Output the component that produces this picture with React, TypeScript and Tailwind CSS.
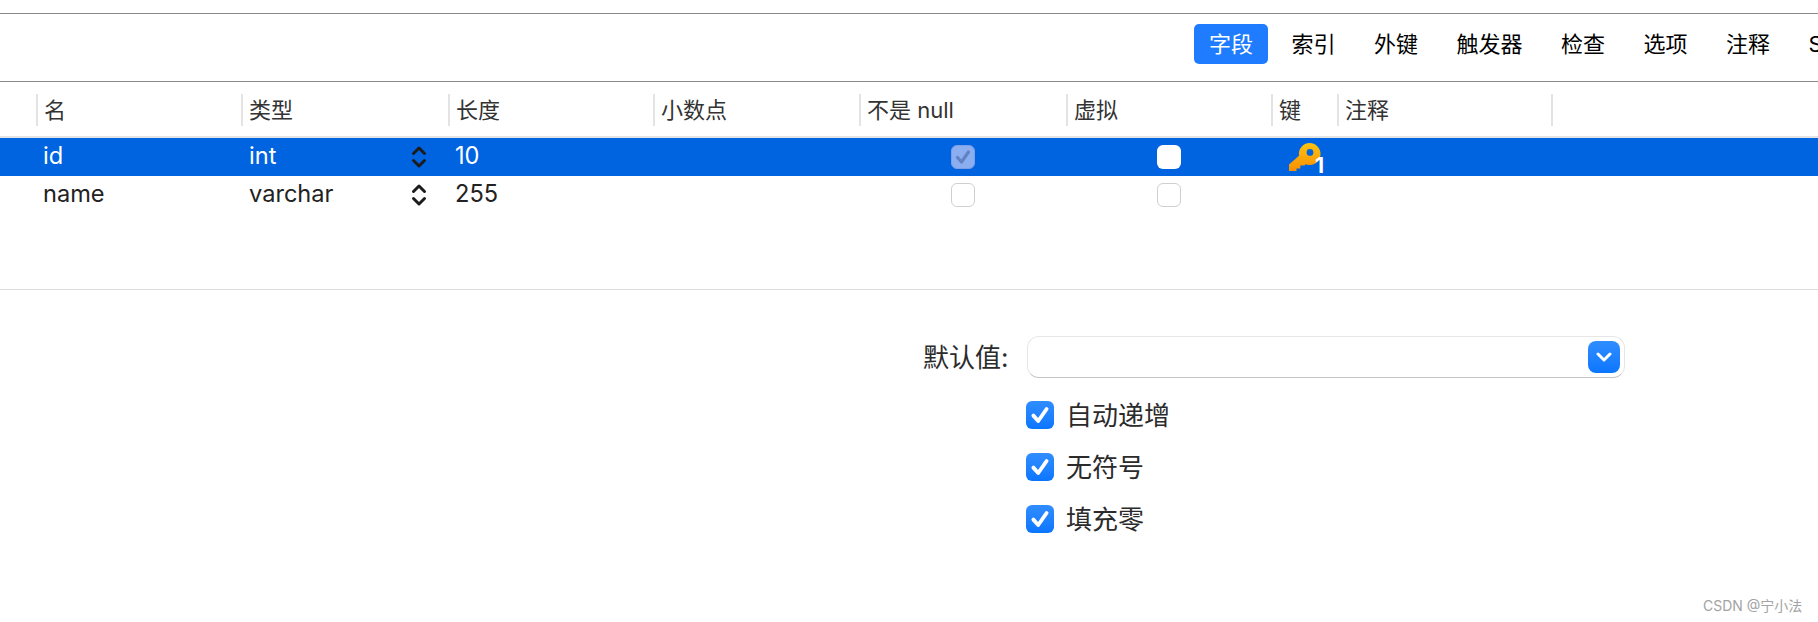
import { useId } from "react";

const tabs = ["字段", "索引", "外键", "触发器", "检查", "选项", "注释", "SQL 预览"];

const columns = [
  { label: "名", width: "w-[205px]" },
  { label: "类型", width: "w-[207px]" },
  { label: "长度", width: "w-[205px]" },
  { label: "小数点", width: "w-[206px]" },
  { label: "不是 null", width: "w-[207px]" },
  { label: "虚拟", width: "w-[205px]" },
  { label: "键", width: "w-[66px]" },
  { label: "注释", width: "w-[214px]" },
];

const options = ["自动递增", "无符号", "填充零"];

const Stepper = () => (
  <svg width="16" height="24" viewBox="0 0 16 24" fill="none" stroke="#1c1c1e" strokeWidth="3" strokeLinecap="round" strokeLinejoin="round">
    <path d="M2.5 8.5 8 3l5.5 5.5" />
    <path d="M2.5 15.5 8 21l5.5-5.5" />
  </svg>
);

const KeyIcon = () => {
  const id = useId();
  return (
    <svg width="32" height="28" viewBox="0 0 32 28" className="block">
      <defs>
        <linearGradient id={id} x1="0" y1="0" x2="0" y2="1">
          <stop offset="0" stopColor="#fdc30f" />
          <stop offset="1" stopColor="#f98f00" />
        </linearGradient>
      </defs>
      <path
        fill={`url(#${id})`}
        fillRule="evenodd"
        d="M20.5 0a11 11 0 0 1 0 22c-1.4 0-2.7-.3-3.9-.7l-1.1 1.2h-4.2v3H7.5V28H0v-6.500l10-8.800A11 11 0 0 1 20.500 0Zm.5 6a3.400 3.400 0 1 0 0 6.800A3.400 3.400 0 0 0 21 6Z"
      />
    </svg>
  );
};

const Check = ({ color, size }: { color: string; size: number }) => (
  <svg width={size} height={size} viewBox="0 0 20 20" fill="none" stroke={color} strokeWidth="3.2" strokeLinecap="round" strokeLinejoin="round">
    <path d="M4.5 10.5 8.5 15l7-10" />
  </svg>
);

const FieldRow = ({
  name,
  type,
  length,
  selected,
}: {
  name: string;
  type: string;
  length: string;
  selected?: boolean;
}) => (
  <div className={`flex h-[38px] items-center text-[23.6px] ${selected ? "bg-[#0064e1] text-white" : "text-[#222222]"}`}>
    <div className="w-[36px]" />
    <div className="w-[205px] pb-[2px] pl-[7px]">{name}</div>
    <div className="flex w-[207px] items-center justify-between pl-[8px] pr-[21px]">
      <span className="pb-[2px]">{type}</span>
      <Stepper />
    </div>
    <div className="w-[205px] pb-[2px] pl-[7px]">{length}</div>
    <div className="w-[206px]" />
    <div className="flex w-[207px] justify-center">
      {selected ? (
        <div className="flex h-[24px] w-[24px] items-center justify-center rounded-[6px] border border-[#7d9fe6] bg-[#8aaef0]">
          <Check color="#6382c4" size={20} />
        </div>
      ) : (
        <div className="h-[24px] w-[24px] rounded-[6px] border border-[#cfcfcf] bg-white" />
      )}
    </div>
    <div className="flex w-[205px] justify-center">
      <div className={`h-[24px] w-[24px] rounded-[6px] bg-white ${selected ? "" : "border border-[#cfcfcf]"}`} />
    </div>
    {selected && (
      <div className="relative ml-[18px] w-[36px]">
        <KeyIcon />
        <span className="absolute left-[26px] top-[12px] text-[21px] font-bold leading-[22px] text-white">1</span>
      </div>
    )}
  </div>
);

export default function App() {
  return (
    <div
      className="relative h-[622px] w-[1818px] overflow-hidden bg-white text-[#222222]"
      style={{ fontFamily: 'Inter, "Noto Sans CJK SC", sans-serif' }}
    >
      <div className="h-[13px]" />
      <div className="h-[1px] bg-[#8a8a8a]" />

      <div className="flex h-[67px] items-start gap-[8.5px] whitespace-nowrap pl-[1194px] pt-[10px] text-[22px]">
        {tabs.map((tab, i) => (
          <div
            key={tab}
            className={`flex h-[40px] shrink-0 items-center rounded-[5px] px-[15px] pt-[1px] ${i === 0 ? "bg-[#1f7cff] text-white" : "text-black"}`}
          >
            {tab}
          </div>
        ))}
      </div>
      <div className="h-[1px] bg-[#8a8a8a]" />

      <div className="flex h-[54px] pl-[36px] pt-[12px]">
        {columns.map((col) => (
          <div key={col.label} className={`${col.width} h-[32px] border-l-2 border-[#e3e3e3] pl-[6px] text-[22px] leading-[33px] text-[#333333]`}>
            {col.label}
          </div>
        ))}
        <div className="h-[32px] border-l-2 border-[#e3e3e3]" />
      </div>
      <div className="h-[2px] bg-[#e3e3e3]" />

      <FieldRow name="id" type="int" length="10" selected />
      <FieldRow name="name" type="varchar" length="255" />

      <div className="h-[75px]" />
      <div className="h-[1px] bg-[#dcdcdc]" />

      <div className="flex flex-col pl-[923px] pt-[45px]">
        <div className="flex items-center gap-[17px]">
          <span className="w-[87px] whitespace-nowrap pt-[2px] text-[26px] leading-[42px] text-[#2b2b2b]">默认值:</span>
          <div className="flex h-[42px] w-[598px] items-center justify-end rounded-[12px] border border-[#e6e6e6] border-b-[#c4c4c4] bg-white pr-[4px]">
            <div className="flex h-[32px] w-[32px] items-center justify-center rounded-[8px] bg-gradient-to-b from-[#2f8dff] to-[#0a76ff]">
              <svg width="16" height="10" viewBox="0 0 16 10" fill="none" stroke="white" strokeWidth="3" strokeLinecap="round" strokeLinejoin="round">
                <path d="M2 2l6 6 6-6" />
              </svg>
            </div>
          </div>
        </div>
        <div className="ml-[103px] mt-[22px] flex flex-col gap-[24px]">
          {options.map((opt) => (
            <div key={opt} className="flex h-[28px] items-center gap-[12px]">
              <div className="flex h-[28px] w-[28px] items-center justify-center rounded-[6px] bg-gradient-to-b from-[#2f8dff] to-[#0a76ff]">
                <Check color="white" size={24} />
              </div>
              <span className="pt-[1px] text-[26px] leading-[28px] text-[#2b2b2b]">{opt}</span>
            </div>
          ))}
        </div>
      </div>

      <div className="absolute left-[1703px] top-[597px] text-[14px] leading-[18px] text-[#a3a3a3]">CSDN @宁小法</div>
    </div>
  );
}
